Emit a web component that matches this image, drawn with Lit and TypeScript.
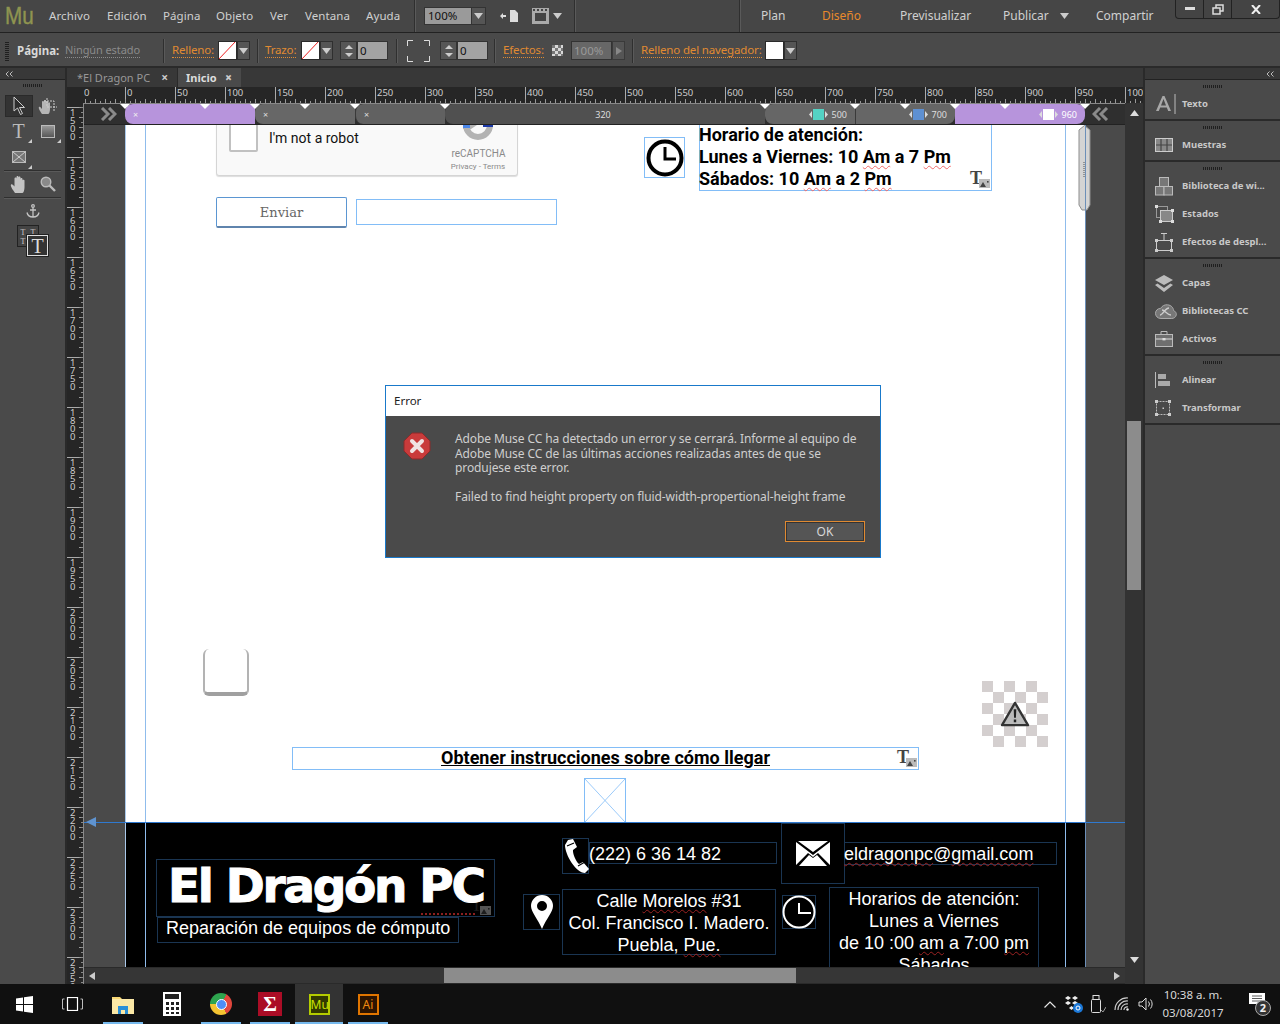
import { LitElement, html, css } from "lit";
import { customElement } from "lit/decorators.js";

const tri = (c = "#ccc") => html`<svg class="tri" width="9" height="6" viewBox="0 0 9 6"><path d="M0 0H9L4.5 6Z" fill=${c}/></svg>`;
const swatch = (k: string) => html`<div class="sw ${k}">${k !== "white" ? html`<svg width="18" height="19" viewBox="0 0 18 19"><path d="M0 19L18 0" stroke="#e22" stroke-width="1"/>${k === "stroke" ? html`<rect x="6" y="6" width="7" height="7" fill="#222" stroke="#e22"/>` : ""}</svg>` : ""}</div><div class="dd">${tri()}</div>`;
const stepper = () => html`<div class="step"><svg width="10" height="16" viewBox="0 0 10 16"><path d="M1 6L5 2L9 6ZM1 10H9L5 14Z" fill="#ccc"/></svg></div><div class="field num">0</div>`;
const grip = () => html`<div class="grip"></div>`;
const dbl = () => html`<svg width="8" height="6" viewBox="0 0 8 6" fill="none" stroke="#bbb"><path d="M3.5 .5L1 3L3.5 5.5M7.5 .5L5 3L7.5 5.5"/></svg>`;
const tIcon = (dark = false) => html`<div class="tim ${dark ? "dk" : ""}"><span>T</span><svg width="11" height="9" viewBox="0 0 11 9"><rect width="11" height="9" fill="#bbb"/><path d="M1 8L4 3L7 8Z" fill="#444"/><rect x="8" y="2" width="1.6" height="1.6" fill="#444"/></svg></div>`;
const bpHandle = (c: string, label: string) => html`<svg width="3" height="7" viewBox="0 0 3 7"><path d="M3 0L0 3.5L3 7Z" fill="#ddd"/></svg><div class="bs ${c}"></div><svg width="3" height="7" viewBox="0 0 3 7"><path d="M0 0L3 3.5L0 7Z" fill="#ddd"/></svg><span class="bl">${label}</span>`;

const menus: [string, number][] = [["Archivo", 58], ["Edición", 56], ["Página", 53], ["Objeto", 54], ["Ver", 35], ["Ventana", 61], ["Ayuda", 48]];
const rulerH = Array.from({ length: 21 }, (_, i) => i * 50);
const rulerV = Array.from({ length: 18 }, (_, i) => String(1500 + i * 50));
const marks = [125, 205, 255, 305, 355, 445, 765, 855, 905, 955, 1005, 1085];

const ctrl: [number, unknown][] = [
  [17, html`<div class="vgrip"></div>`],
  [48, html`<b class="lab-b">Página:</b>`],
  [98, html`<span class="dim">Ningún estado</span>`],
  [9, html`<div class="vs"></div>`],
  [46, html`<span class="or">Relleno:</span>`],
  [39, swatch("fill")],
  [8, html`<div class="vs"></div>`],
  [36, html`<span class="or">Trazo:</span>`],
  [39, swatch("stroke")],
  [56, stepper()],
  [11, html`<div class="vs"></div>`],
  [33, html`<svg width="23" height="22" viewBox="0 0 23 22" fill="none" stroke="#ddd"><path d="M.5 6V.5H6M17 .5H22.5V6M22.5 16V21.5H17M6 21.5H.5V16"/></svg>`],
  [54, stepper()],
  [9, html`<div class="vs"></div>`],
  [49, html`<span class="or">Efectos:</span>`],
  [19, html`<div class="chk"></div>`],
  [61, html`<div class="field pct">100%</div><div class="arr"><svg width="6" height="8" viewBox="0 0 6 8"><path d="M0 0L6 4L0 8Z" fill="#888"/></svg></div>`],
  [9, html`<div class="vs"></div>`],
  [124, html`<span class="or">Relleno del navegador:</span>`],
  [31, swatch("white")],
];

const panel: { k: string; label: string }[][] = [
  [{ k: "a", label: "Texto" }],
  [{ k: "grid", label: "Muestras" }],
  [{ k: "wid", label: "Biblioteca de wi..." }, { k: "est", label: "Estados" }, { k: "eff", label: "Efectos de despl..." }],
  [{ k: "cap", label: "Capas" }, { k: "cc", label: "Bibliotecas CC" }, { k: "act", label: "Activos" }],
  [{ k: "ali", label: "Alinear" }, { k: "tra", label: "Transformar" }],
];

const pIcon = (k: string) => {
  switch (k) {
    case "a": return html`<svg width="22" height="22" viewBox="0 0 22 22"><path d="M1 18L7.5 3H9.5L16 18H13.2L11.8 14.5H5.2L3.8 18ZM6 12.5H11L8.5 6Z" fill="#a8a8a8"/><path d="M20 1V21" stroke="#bbb"/></svg>`;
    case "grid": return html`<svg width="18" height="14" viewBox="0 0 18 14"><rect x=".5" y=".5" width="17" height="13" fill="#888" stroke="#ccc"/><path d="M6 1V13M12 1V13M1 7H17" stroke="#444" stroke-width="1.2"/></svg>`;
    case "wid": return html`<svg width="18" height="19" viewBox="0 0 18 19"><rect x="4.5" y=".5" width="9" height="9" fill="#777" stroke="#bbb"/><rect x=".5" y="9.5" width="8.5" height="8.5" fill="#777" stroke="#bbb"/><rect x="9" y="9.5" width="8.5" height="8.5" fill="#777" stroke="#bbb"/></svg>`;
    case "est": return html`<svg width="19" height="18" viewBox="0 0 19 18"><rect x="1.5" y="1.5" width="11" height="11" fill="none" stroke="#999"/><rect x="5.5" y="5.5" width="12" height="11" fill="#888" stroke="#ccc"/><path d="M0 0h3v3H0zM16 4h3v3h-3zM4 15h3v3H4zM16 15h3v3h-3z" fill="#ddd"/></svg>`;
    case "eff": return html`<svg width="18" height="19" viewBox="0 0 18 19" fill="none" stroke="#ccc"><path d="M6 .5H12M9 1V7"/><rect x="1.5" y="7.5" width="15" height="10"/><path d="M0 6h3v3H0zM15 6h3v3h-3zM0 16h3v3H0zM15 16h3v3h-3z" fill="#ccc" stroke="none"/></svg>`;
    case "cap": return html`<svg width="18" height="17" viewBox="0 0 18 17"><path d="M9 0L18 5L9 10L0 5Z" fill="#bbb"/><path d="M2.5 8.5L0 10L9 17L18 10L15.5 8.5L9 13Z" fill="#bbb"/></svg>`;
    case "cc": return html`<svg width="22" height="15" viewBox="0 0 22 15" fill="none"><path d="M6 14.5C2.5 14.5 .5 12 .5 9.3C.5 6.5 2.8 4.3 5.5 4.5C7 1.8 9.8 .5 12.5 .8C16.5 1.2 18.5 4 18.5 6.5C20.5 7.3 21.5 9 21.3 10.8C21 13 19 14.5 16.8 14.5Z" fill="#777" stroke="#aaa"/><path d="M5 11C8 11 10 4 14 4M16 11C12 11 10 6 7 6" stroke="#ccc" stroke-width="1.4"/></svg>`;
    case "act": return html`<svg width="18" height="16" viewBox="0 0 18 16"><rect x=".5" y="3.5" width="17" height="12" fill="#6f6f6f" stroke="#bbb"/><path d="M6 3V.5H12V3" fill="none" stroke="#bbb"/><path d="M1 8H17" stroke="#ddd"/><rect x="7.5" y="7" width="3" height="2.4" fill="#ddd"/></svg>`;
    case "ali": return html`<svg width="15" height="16" viewBox="0 0 15 16"><path d="M.5 0V16" stroke="#bbb"/><rect x="3" y="2" width="8" height="5" fill="#aaa"/><rect x="3" y="9" width="12" height="5" fill="#aaa"/></svg>`;
    default: return html`<svg width="16" height="16" viewBox="0 0 16 16"><rect x="1.5" y="1.5" width="13" height="13" fill="none" stroke="#bbb" stroke-dasharray="2 1"/><path d="M0 0h3v3H0zM13 0h3v3h-3zM0 13h3v3H0zM13 13h3v3h-3zM7.5 7.5h1.5v1.5H7.5z" fill="#ccc"/></svg>`;
  }
};

@customElement("app-root")
export class AppRoot extends LitElement {
  static styles = css`
    :host { display: block; width: 1280px; height: 1024px; }
    * { box-sizing: border-box; }
    .root { position: relative; width: 1280px; height: 1024px; overflow: hidden; background: #4a4a4a; display: grid; grid-template-rows: 33px 35px 916px 40px; font-family: "Noto Sans", sans-serif; font-size: 11.5px; color: #ccc; }
    svg { display: block; flex: none; }

    .menubar { display: flex; align-items: center; background: #464646; border-bottom: 1px solid #222; height: 33px; padding-bottom: 1px; position: relative; }
    .logo { width: 49px; padding-left: 5px; font: 24px/28px "Liberation Sans", sans-serif; color: #8f9450; flex: none; white-space: nowrap; transform: scaleX(.86); transform-origin: 5px 0; -webkit-text-stroke: .4px #8f9450; }
    .mi { font-size: 11.5px; color: #d0d0d0; flex: none; letter-spacing: .1px; }
    .vs { width: 2px; height: 24px; background: #2f2f2f; border-right: 1px solid #5a5a5a; flex: none; }
    .mbar-vs { height: 32px; }
    .zoomc { display: flex; margin-left: 8px; height: 18px; }
    .zf { width: 48px; background: #9a9a9a; color: #111; font-size: 11.5px; line-height: 16px; padding-left: 3px; border: 1px solid #333; }
    .zd { width: 14px; background: #555; border: 1px solid #333; border-left: 0; display: flex; align-items: center; justify-content: center; }
    .mic1 { margin-left: 14px; }
    .mic2 { margin-left: 14px; }
    .mtri { margin: 0 12px 0 4px; }
    .mr { margin-left: auto; display: flex; align-items: center; height: 100%; }
    .rvs { margin-right: 20px; }
    .mr span { font-size: 12px; color: #d0d0d0; flex: none; }
    .mr .plan { width: 61px; }
    .mr .dis { width: 78px; color: #e88a2c; }
    .mr .pre { width: 103px; }
    .mr .pub { width: 57px; }
    .pubtri { margin-right: 27px; }
    .mr .com { width: 79px; }
    .win { display: flex; align-self: flex-start; width: 105px; height: 19px; border: 1px solid #222; border-top: 0; border-radius: 0 0 4px 4px; background: #444; }
    .win div { display: flex; align-items: center; justify-content: center; height: 18px; border-right: 1px solid #222; width: 28px; }
    .win div:last-child { border-right: 0; flex: 1; }

    .ctl { display: flex; align-items: center; border-bottom: 2px solid #2a2a2a; background: #4a4a4a; height: 35px; padding-top: 2px; }
    .cell { display: flex; align-items: center; height: 19px; flex: none; white-space: nowrap; }
    .lab-b { color: #d8d8d8; font-size: 11.5px; }
    .dim { color: #8a8a8a; border-bottom: 1px dotted #8a8a8a; font-size: 11px; letter-spacing: -.1px; line-height: 14px; }
    .or { color: #e08a32; border-bottom: 1px dotted #e08a32; line-height: 14px; letter-spacing: -.15px; }
    .vgrip { width: 4px; height: 20px; margin-left: 5px; background: repeating-linear-gradient(0deg, #1f1f1f 0 1px, transparent 1px 2px); }
    .sw { width: 19px; height: 19px; background: #fff; border: 1px solid #2a2a2a; flex: none; overflow: hidden; }
    .sw svg { margin: -1px; }
    .dd { width: 13px; height: 19px; background: #555; border: 1px solid #2f2f2f; display: flex; align-items: center; justify-content: center; flex: none; }
    .step { width: 17px; height: 19px; background: #565656; border: 1px solid #333; display: flex; align-items: center; justify-content: center; flex: none; }
    .field { height: 19px; background: #a3a3a3; border: 1px solid #333; color: #111; line-height: 17px; padding-left: 2px; font-size: 11.5px; flex: none; }
    .num { width: 31px; }
    .pct { width: 41px; background: #676767; color: #999; }
    .arr { width: 13px; height: 19px; background: #555; border: 1px solid #3a3a3a; display: flex; align-items: center; justify-content: center; }
    .chk { width: 11px; height: 11px; background: repeating-conic-gradient(#d8d8d8 0 25%, #777 0 50%) 0 0 / 6px 6px; }

    .main { display: flex; height: 916px; background: #2a2a2a; }
    .tools { width: 65px; flex: none; background: #4a4a4a; display: flex; flex-direction: column; }
    .strip { height: 12px; background: #383838; border-bottom: 1px solid #222; display: flex; align-items: center; }
    .strip.l { padding-left: 5px; }
    .strip.r { justify-content: flex-end; padding-right: 6px; }
    .grip { width: 20px; height: 3px; margin: 4px auto 0; background: repeating-linear-gradient(90deg, #1f1f1f 0 1px, transparent 1px 2px); flex: none; }
    .toolgrid { display: grid; grid-template-columns: 29px 29px; padding-left: 4px; margin-top: 6px; grid-auto-rows: 25.5px; }
    .toolgrid.zero { margin-top: 0; }
    .t { display: flex; align-items: center; justify-content: center; position: relative; }
    .t.sel { background: #333; border: 1px solid #2a2a2a; height: 22px; margin: 2px 0 0 1px; }
    .t.corner::after { content: ""; position: absolute; right: 1px; bottom: 1px; border: 2px solid transparent; border-right-color: #ccc; border-bottom-color: #ccc; }
    .tT { font: 20px/22px "Liberation Serif", serif; color: #bbb; }
    .hr { background: #2f2f2f; border-bottom: 1px solid #5a5a5a; margin: 0 4px; height: 2px; flex: none; }
    .anchor { display: flex; justify-content: center; margin: 5px 0 7px; }
    .tstack { position: relative; width: 31px; height: 31px; margin-left: 17px; }
    .ts1 { width: 22px; height: 22px; border: 1px solid #222; background: #444; font: 8px/9px "Liberation Serif", serif; color: #ccc; display: grid; grid-template-columns: 1fr 1fr; text-align: center; padding-top: 2px; }
    .ts2 { position: absolute; right: 0; bottom: 0; width: 21px; height: 21px; background: #333; border: 1px solid #ddd; outline: 1px solid #222; font: 20px/20px "Liberation Serif", serif; color: #ddd; text-align: center; }

    .center { width: 1080px; flex: none; border-left: 2px solid #2a2a2a; border-right: 2px solid #2a2a2a; display: flex; flex-direction: column; }
    .tabs { height: 19px; background: #383838; display: flex; flex: none; font-size: 11px; }
    .tab { display: flex; align-items: center; height: 19px; }
    .tab1 { width: 110px; padding-left: 10px; justify-content: space-between; padding-right: 9px; color: #979797; }
    .tab2 { width: 64px; background: #4a4a4a; padding-left: 8px; padding-right: 9px; justify-content: space-between; color: #ddd; font-weight: 700; border-left: 1px solid #2a2a2a; }
    .tab b { color: #ccc; font-size: 12px; }
    .hrow { display: flex; height: 16px; flex: none; background: #262626; }
    .corner0 { width: 17px; flex: none; }
    .hruler { flex: 1; display: flex; overflow: hidden; font: 9.5px/11px "Noto Sans", sans-serif; color: #ccc;
      background-image: linear-gradient(90deg, #999 1px, transparent 1px), linear-gradient(90deg, #999 1px, transparent 1px), linear-gradient(90deg, #aaa 1px, transparent 1px);
      background-size: 5px 2px, 10px 4px, 50px 100%; background-position: 1px bottom, 1px bottom, 41px 0; background-repeat: repeat-x; }
    .hc { flex: none; width: 50px; padding-left: 2px; }
    .hc.first { width: 41px; padding-left: 0; }
    .body { flex: 1; display: flex; min-height: 0; }
    .vruler { width: 17px; flex: none; border-right: 1px solid #8a8a8a; background-color: #262626; overflow: hidden; display: flex; flex-direction: column;
      background-image: linear-gradient(0deg, #888 1px, transparent 1px), linear-gradient(0deg, #999 1px, transparent 1px), linear-gradient(0deg, #aaa 1px, transparent 1px);
      background-size: 2px 5px, 4px 10px, 100% 50px; background-position: right 0, right 5px, 0 5px; background-repeat: repeat-y; }
    .vs0 { height: 5px; flex: none; }
    .vc { height: 50px; flex: none; padding: 1px 0 0 3px; font: 9.5px/8px "Noto Sans", sans-serif; color: #ccc; }
    .vc span { display: block; height: 8px; }
    .mid { width: 1041px; flex: none; display: flex; flex-direction: column; }
    .bpbar { height: 21px; flex: none; display: flex; background: #2f2f2f; position: relative; border-top: 1px solid #888; color: #ddd; font-size: 9px; }
    .chev { width: 41px; flex: none; display: flex; align-items: center; justify-content: center; padding-left: 7px; }
    .chev.rt { width: 40px; padding: 0 10px 0 0; }
    .seg { flex: none; display: flex; align-items: center; height: 20px; border-radius: 8px 0 0 8px; }
    .purple { width: 130px; background: #b794dc; padding-left: 8px; color: #eee; }
    .g1 { width: 100px; background: #676767; padding-left: 8px; }
    .g2 { width: 90px; background: #616161; padding-left: 8px; border-left: 1px solid #3a3a3a; }
    .g3 { width: 320px; background: #505050; justify-content: center; padding-right: 4px; }
    .g4 { width: 90px; background: #666; justify-content: flex-end; gap: 1px; padding-right: 8px; border-radius: 8px 0 0 8px; }
    .g5 { width: 100px; background: #666; justify-content: flex-end; gap: 1px; padding-right: 8px; border-radius: 0 0 8px 0; border-left: 1px solid #3a3a3a; }
    .p2 { width: 130px; background: #b794dc; justify-content: flex-end; gap: 1px; padding-right: 8px; border-radius: 0 8px 8px 0; color: #fff; }
    .bs { width: 11px; height: 11px; }
    .bl { margin-left: 3px; }
    .teal { background: #54d2c4; } .blue { background: #5e90d2; } .wht { background: #fff; }
    .m { position: absolute; top: 0; width: 0; height: 0; border: 5px solid transparent; border-top: 5px solid #fff; border-bottom: 0; margin-left: -5px; }
    .canvas { height: 843px; flex: none; position: relative; overflow: hidden; background: #4a4a4a; border-top: 1px solid #222; }
    .stage { position: absolute; left: -84px; top: -125px; width: 1280px; height: 1024px; color: #000; font-family: "Liberation Sans", sans-serif; }
    .stage > * { position: absolute; }
    .thumb-in { position: absolute; left: 994px; top: 0; }
    .page { left: 125px; top: 100px; width: 960px; height: 723px; background: #fff; }
    .guide { top: 100px; width: 1px; height: 867px; background: #8fbcec; }
    .g-a { left: 145px; } .g-b { left: 1065px; } .g-c { left: 1085px; background: #6c8fb8; } .g-d { left: 125px; background: #a9c8ea; }
    .footer { left: 125px; top: 823px; width: 960px; height: 144px; background: #000; }
    .guide.over { z-index: 2; }
    .hline { left: 84px; top: 822px; width: 1041px; height: 1px; background: #2f79cf; z-index: 3; }
    .hmark { left: 86px; top: 817px; border: 5px solid transparent; border-right: 10px solid #5f93cf; border-left: 0; z-index: 3; }

    .rc { left: 216px; top: 110px; width: 302px; height: 66px; background: #f9f9f9; border: 1px solid #d5d5d5; border-radius: 3px; box-shadow: 0 1px 1px #ddd; }
    .rc-box { left: 229px; top: 120px; width: 29px; height: 32px; background: #fff; border: 2px solid #c1c1c1; border-radius: 2px; }
    .rc-t { left: 269px; top: 130px; font: 14px/17px Roboto, sans-serif; color: #111; }
    .rc-logo { left: 463px; top: 112px; }
    .rc-a { left: 451px; top: 148px; font: 10px/12px Roboto, sans-serif; color: #8a8a8a; width: 55px; text-align: center; }
    .rc-b { left: 450px; top: 162px; font: 8px/10px Roboto, sans-serif; color: #8a8a8a; width: 56px; text-align: center; }
    .enviar { left: 216px; top: 197px; width: 131px; height: 31px; border: 1px solid #5b96d2; border-bottom: 2px solid #5f84ad; border-radius: 2px; background: #fff; font: 13px/29px "DejaVu Serif", serif; color: #666; text-align: center; }
    .blue-b { border: 1px solid #82bdf7; }
    .ebox { left: 356px; top: 199px; width: 201px; height: 26px; }
    .clock-b { left: 644px; top: 137px; width: 41px; height: 41px; display: flex; align-items: center; justify-content: center; }
    .hours { left: 699px; top: 124px; width: 293px; height: 67px; font: 700 18px/22px Roboto, sans-serif; color: #000; white-space: nowrap; }
    .hours div { margin: -1px 0 0 -1px; }
    .sq { text-decoration: underline wavy #ef6a6a 1px; text-underline-offset: 2px; text-decoration-skip-ink: none; }
    .sqd { text-decoration: underline wavy #9c2222 1px; text-underline-offset: 2px; text-decoration-skip-ink: none; }
    .tim { width: 20px; height: 18px; }
    .tim span { position: absolute; left: 0; top: -2px; font: 700 18px/20px "Liberation Serif", serif; color: #444; }
    .tim svg { position: absolute; right: 0; bottom: 0; }
    .tim.dk span { color: #3a3a3a; font-weight: 400; }
    .tim1 { left: 970px; top: 170px; } .tim2 { left: 897px; top: 749px; } .tim3 { left: 471px; top: 897px; opacity: .45; }
    .btn-sh { left: 203px; top: 649px; width: 46px; height: 47px; background: #fff; border: 2px solid #b3b3b3; border-top: 0; border-bottom: 4px solid #a0a0a0; border-radius: 6px; }
    .chk2 { left: 982px; top: 681px; width: 66px; height: 66px; background: repeating-conic-gradient(#d4cfcf 0 25%, #fff 0 50%) 11px 0 / 22px 22px; display: flex; align-items: center; justify-content: center; }
    .title { left: 292px; top: 747px; width: 627px; height: 23px; font: 700 18px/20px Roboto, sans-serif; text-align: center; text-decoration: underline; color: #000; }
    .xbox { left: 584px; top: 778px; width: 42px; height: 45px; }

    .nb { border: 1px solid #1a3552; color: #fff; z-index: 1; }
    .flogo { left: 156px; top: 859px; width: 339px; height: 58px; font: 700 47px/52px "DejaVu Sans", sans-serif; padding-left: 11px; letter-spacing: -2.3px; white-space: nowrap; -webkit-text-stroke: 1px #fff; }
    .flogo-sq { left: 421px; top: 912px; width: 54px; height: 3px; border-bottom: 2px dotted #8c1f1f; z-index: 2; }
    .fsub { left: 157px; top: 917px; width: 302px; height: 26px; font: 18px/20px "Liberation Sans", sans-serif; padding-left: 8px; white-space: nowrap; }
    .fph { left: 562px; top: 838px; width: 27px; height: 36px; display: flex; align-items: center; justify-content: center; }
    .fpt { left: 589px; top: 842px; width: 188px; height: 22px; font: 18px/23px "Liberation Sans", sans-serif; white-space: nowrap; text-indent: -1px; }
    .fen { left: 781px; top: 823px; width: 64px; height: 61px; display: flex; align-items: center; justify-content: center; }
    .fem { left: 844px; top: 842px; width: 213px; height: 23px; font: 18px/23px "Liberation Sans", sans-serif; white-space: nowrap; text-indent: -1px; }
    .fpin { left: 523px; top: 894px; width: 37px; height: 36px; display: flex; align-items: center; justify-content: center; }
    .fad { left: 562px; top: 889px; width: 214px; height: 66px; font: 18px/22px "Liberation Sans", sans-serif; text-align: center; white-space: nowrap; }
    .fcl { left: 782px; top: 895px; width: 34px; height: 34px; display: flex; align-items: center; justify-content: center; }
    .fho { left: 829px; top: 887px; width: 210px; height: 85px; font: 18px/20px "Liberation Sans", sans-serif; text-align: center; white-space: nowrap; }
    .fho div { line-height: 22px; }

    .hscroll { height: 16px; flex: none; background: #363636; border-top: 1px solid #2a2a2a; display: flex; align-items: center; justify-content: space-between; padding: 0 5px; position: relative; }
    .hthumb { position: absolute; left: 360px; top: 0; width: 352px; height: 15px; background: #8c8c8c; }
    .vsb { width: 18px; flex: none; background: #333; position: relative; display: flex; flex-direction: column; justify-content: space-between; align-items: center; padding: 7px 0 21px; }
    .vthumb { position: absolute; left: 2px; top: 318px; width: 14px; height: 169px; background: #8c8c8c; }
    .right { width: 135px; flex: none; background: #4a4a4a; }
    .grp { border-bottom: 2px solid #2a2a2a; padding: 5px 0 1px; display: flex; flex-direction: column; }
    .grp .grip { margin: 0 auto 2px; width: 20px; height: 3px; }
    .it { display: flex; align-items: center; height: 28px; font: 700 9.5px/12px "Noto Sans", sans-serif; color: #c8c8c8; white-space: nowrap; }
    .ic { width: 37px; padding-left: 10px; display: flex; justify-content: flex-start; flex: none; }

    .task { background: #101010; display: flex; height: 40px; position: relative; z-index: 4; }
    .tb { width: 48px; height: 40px; flex: none; display: flex; align-items: center; justify-content: center; position: relative; }
    .tb.gap { margin-left: 3px; }
    .tb.m1 { margin-left: 1px; }
    .tb.on::after { content: ""; position: absolute; left: 4px; right: 4px; bottom: 0; height: 2px; background: #76b9ed; }
    .tb.act { background: #333; }
    .tb.act::after { left: 0; right: 0; }
    .chrome { width: 22px; height: 22px; border-radius: 50%; background: conic-gradient(from 30deg, #e0463c 0 120deg, #f4c331 120deg 240deg, #2da44e 240deg 360deg); display: flex; align-items: center; justify-content: center; }
    .chrome i { width: 9px; height: 9px; border-radius: 50%; background: #4e8df5; border: 1.5px solid #fff; box-sizing: content-box; }
    .xara { width: 24px; height: 24px; background: #ab0d26; color: #fff; font: 700 21px/24px "Liberation Serif", serif; text-align: center; }
    .mu { width: 21px; height: 21px; background: #333a00; border: 2px solid #b4cc00; color: #c8e000; font: 12px/17px "Noto Sans", sans-serif; text-align: center; }
    .ai { width: 21px; height: 21px; background: #2d1400; border: 2px solid #e07500; color: #f08a10; font: 12px/17px "Noto Sans", sans-serif; text-align: center; }
    .tray { margin-left: auto; display: flex; align-items: center; height: 40px; }
    .ti { flex: none; width: 24px; display: flex; justify-content: center; }
    .clock { width: 66px; margin-left: 2px; text-align: center; font: 11.5px/18px "Noto Sans", sans-serif; color: #d8d8d8; white-space: nowrap; }
    .noti { width: 46px; margin-left: 8px; display: flex; justify-content: center; position: relative; height: 22px; }
    .bdg { position: absolute; left: 21px; top: 7px; width: 16px; height: 16px; border-radius: 50%; background: #333; border: 1px solid #aaa; color: #eee; font: 700 11px/14px "Noto Sans", sans-serif; text-align: center; }

    .dialog { position: absolute; left: 385px; top: 385px; width: 496px; height: 173px; background: #4a4a4a; border: 1px solid #1979ca; z-index: 5; display: flex; flex-direction: column; font-family: "Noto Sans", sans-serif; }
    .dt { height: 30px; background: #fff; color: #222; font-size: 11.5px; line-height: 30px; padding-left: 8px; flex: none; }
    .db { flex: 1; display: flex; padding: 15px 16px 15px 17px; position: relative; }
    .dic { width: 52px; flex: none; padding-top: 1px; }
    .dx { width: 405px; flex: none; padding-top: 1px; color: #cfcfcf; font-size: 12px; line-height: 14.5px; letter-spacing: -.1px; }
    .dx p { margin: 0 0 14.5px; }
    .ok { position: absolute; right: 15px; bottom: 15px; width: 80px; height: 21px; border: 1px solid #e08a32; background: #555; box-shadow: inset 0 0 0 1px #333; color: #d8d8d8; font-size: 12px; line-height: 19px; text-align: center; }
  `;

  render() {
    return html`<div class="root">
      <div class="menubar">
        <div class="logo">Mu</div>
        ${menus.map(([m, w]) => html`<div class="mi" style="width:${w}px">${m}</div>`)}
        <div class="vs mbar-vs"></div>
        <div class="zoomc"><div class="zf">100%</div><div class="zd">${tri()}</div></div>
        <svg class="mic1" width="18" height="14" viewBox="0 0 18 14"><path d="M0 7L3 4V6H6V8H3V10Z M10 1H15L18 4V13H10Z" fill="#ddd"/></svg>
        <svg class="mic2" width="17" height="16" viewBox="0 0 17 16"><rect width="17" height="16" fill="#aaa"/><rect x="3" y="5" width="11" height="8" fill="#444"/><path d="M1 1h2v2H1zM5 1h2v2H5zM9 1h2v2H9zM13 1h2v2h-2z" fill="#444"/></svg>
        <div class="mtri">${tri()}</div>
        <div class="vs mbar-vs"></div>
        <div class="mr">
          <div class="vs mbar-vs rvs"></div>
          <span class="plan">Plan</span><span class="dis">Diseño</span><span class="pre">Previsualizar</span><span class="pub">Publicar</span>
          <div class="pubtri">${tri()}</div><span class="com">Compartir</span>
          <div class="win">
            <div><svg width="10" height="4" viewBox="0 0 10 4"><rect width="10" height="3" fill="#ddd"/></svg></div>
            <div><svg width="12" height="11" viewBox="0 0 12 11" fill="none" stroke="#ddd" stroke-width="1.5"><rect x="4" y="1" width="7" height="6"/><rect x="1" y="4" width="7" height="6" fill="#444"/></svg></div>
            <div><svg width="10" height="9" viewBox="0 0 10 9" stroke="#eee" stroke-width="2"><path d="M1 0L9 9M9 0L1 9"/></svg></div>
          </div>
        </div>
      </div>

      <div class="ctl">
        ${ctrl.map(([w, c]) => html`<div class="cell" style="width:${w}px">${c}</div>`)}
      </div>

      <div class="main">
        <div class="tools">
          <div class="strip l">${dbl()}</div>
          ${grip()}
          <div class="toolgrid">
            <div class="t sel"><svg width="13" height="20" viewBox="0 0 13 20"><path d="M1 1V15L4.5 12L7.5 18.5L9.5 17.5L6.5 11.5H11.5Z" fill="#2d2d2d" stroke="#ccc"/></svg></div>
            <div class="t"><svg width="20" height="20" viewBox="0 0 20 20"><path d="M4 18C2 15 0 12 1 11C2 10 3 12 4 13V6C4 4.5 6 4.5 6 6V5C6 3.5 8 3.5 8 5V6C8 4.5 10 4.5 10 6V7C10 6 12 6 12 7V13C12 16 11 18 10 18Z" fill="#b5b5b5"/><path d="M9 2V11H19M6 5H16V15" fill="none" stroke="#ccc" stroke-dasharray="2 1"/></svg></div>
            <div class="t corner"><span class="tT">T</span></div>
            <div class="t corner"><svg width="14" height="13" viewBox="0 0 14 13"><defs><linearGradient id="g" x1="0" y1="0" x2="0" y2="1"><stop offset="0" stop-color="#9a9a9a"/><stop offset="1" stop-color="#555"/></linearGradient></defs><rect x=".5" y=".5" width="13" height="12" fill="url(#g)" stroke="#bbb"/></svg></div>
            <div class="t corner"><svg width="14" height="12" viewBox="0 0 14 12"><rect x=".5" y=".5" width="13" height="11" fill="#777" stroke="#bbb"/><path d="M1 1L13 11M13 1L1 11" stroke="#ccc"/></svg></div>
            <div class="t"></div>
          </div>
          <div class="hr"></div>
          <div class="toolgrid zero">
            <div class="t"><svg width="18" height="18" viewBox="0 0 18 18"><path d="M5 18C3 15 0 11 1 9.5C2 8.5 3.5 10.5 4.5 11.5V3.5C4.5 2 6.5 2 6.5 3.5V2C6.5.5 8.5.5 8.5 2V2.5C8.5 1 10.5 1 10.5 2.5V4C10.5 2.5 12.5 2.5 12.5 4V5.5C12.5 4.5 14.5 4.5 14.5 5.5V12C14.5 15 13.5 18 12.5 18Z" fill="#c4c4c4"/></svg></div>
            <div class="t"><svg width="16" height="16" viewBox="0 0 16 16"><circle cx="6" cy="6" r="4.8" fill="#8a8a8a" stroke="#bbb" stroke-width="1.4"/><path d="M9.5 9.5L15 15" stroke="#bbb" stroke-width="2.4"/></svg></div>
          </div>
          <div class="hr"></div>
          <div class="anchor"><svg width="14" height="14" viewBox="0 0 14 14" fill="none" stroke="#c4c4c4" stroke-width="1.3"><circle cx="7" cy="2" r="1.3"/><path d="M7 3.5V13M4 6H10M1 8.5C1.5 11 4 13 7 13C10 13 12.5 11 13 8.5"/></svg></div>
          <div class="tstack"><div class="ts1"><span>T</span><span>T</span><span>T</span></div><div class="ts2">T</div></div>
        </div>

        <div class="center">
          <div class="tabs">
            <div class="tab tab1">*El Dragon PC <b>×</b></div>
            <div class="tab tab2">Inicio <b>×</b></div>
          </div>
          <div class="hrow">
            <div class="corner0"></div>
            <div class="hruler">
              <div class="hc first">0</div>
              ${rulerH.map((n) => html`<div class="hc">${n}</div>`)}
            </div>
          </div>
          <div class="body">
            <div class="vruler">
              <div class="vs0"></div>
              ${rulerV.map((n) => html`<div class="vc">${[...n].map((d) => html`<span>${d}</span>`)}</div>`)}
            </div>
            <div class="mid">
              <div class="bpbar">
                <div class="chev"><svg width="17" height="14" viewBox="0 0 17 14" fill="none" stroke="#8a8a8a" stroke-width="3"><path d="M2 1L8 7L2 13M9 1L15 7L9 13"/></svg></div>
                <div class="seg purple">×</div>
                <div class="seg g1">×</div>
                <div class="seg g2">×</div>
                <div class="seg g3">320</div>
                <div class="seg g4">${bpHandle("teal", "500")}</div>
                <div class="seg g5">${bpHandle("blue", "700")}</div>
                <div class="seg p2">${bpHandle("wht", "960")}</div>
                <div class="chev rt"><svg width="17" height="14" viewBox="0 0 17 14" fill="none" stroke="#8a8a8a" stroke-width="3"><path d="M15 1L9 7L15 13M8 1L2 7L8 13"/></svg></div>
                ${marks.map((x) => html`<div class="m" style="left:${x - 84}px"></div>`)}
              </div>
              <div class="canvas">
                <div class="stage">
                  <div class="page"></div>
                  <div class="footer"></div>
                  <div class="guide g-d"></div>
                  <div class="guide g-a over"></div><div class="guide g-b over"></div><div class="guide g-c over"></div>
                  <div class="hline"></div>
                  <div class="hmark"></div>

                  <div class="rc"></div><div class="rc-box"></div><div class="rc-t">I'm not a robot</div>
                  <svg class="rc-logo" width="30" height="32" viewBox="0 0 30 32" fill="none"><path d="M3 13A12 12 0 0 0 27 13" stroke="#b3b3b3" stroke-width="6"/><path d="M8 17L14 13H0V17Z" fill="#b3b3b3"/><rect x="0" y="11" width="7" height="5" fill="#4a86e8"/><rect x="20" y="11" width="10" height="4" fill="#1c3aa9"/></svg>
                  <div class="rc-a">reCAPTCHA</div><div class="rc-b">Privacy - Terms</div>
                  <div class="enviar">Enviar</div>
                  <div class="ebox blue-b"></div>
                  <div class="clock-b blue-b"><svg width="38" height="38" viewBox="0 0 38 38" fill="none" stroke="#000"><circle cx="19" cy="19" r="16.5" stroke-width="4"/><path d="M19 8V20H30" stroke-width="3"/></svg></div>
                  <div class="hours blue-b"><div>Horario de atención:<br>Lunes a Viernes: 10 <span class="sq">Am</span> a 7 <span class="sq">Pm</span><br>Sábados: 10 <span class="sq">Am</span> a 2 <span class="sq">Pm</span></div></div>
                  <div class="tim tim1">${tIcon()}</div>
                  <div class="btn-sh"></div>
                  <div class="chk2"><svg width="30" height="26" viewBox="0 0 32 28"><path d="M16 2L30 26H2Z" fill="#bbb" stroke="#333" stroke-width="2.5" stroke-linejoin="round"/><path d="M14.6 9H17.4L17 18H15ZM14.7 20H17.3V23H14.7Z" fill="#222"/></svg></div>
                  <div class="title blue-b">Obtener instrucciones sobre cómo llegar</div>
                  <div class="tim tim2">${tIcon()}</div>
                  <svg class="xbox" width="42" height="45" viewBox="0 0 42 45" fill="none" stroke="#82bdf7"><rect x=".5" y=".5" width="41" height="44"/><path d="M1 1L41 44M41 1L1 44" stroke-width=".8"/></svg>

                  <div class="flogo nb">El Dragón PC</div>
                  <div class="tim tim3">${tIcon(true)}</div>
                  <div class="flogo-sq"></div>
                  <div class="fsub nb">Reparación de equipos de cómputo</div>
                  <div class="fph nb"><svg width="28" height="36" viewBox="0 0 28 36"><path d="M6 2L11 1L15 9L11 12C10.5 15 13.5 23 17 26L21 24L27 31L23 35C14 35 3 17 3 7Z" fill="#fff"/><path d="M5 8L12 5M16 28L23 24" stroke="#000" stroke-width="1.2"/></svg></div>
                  <div class="fpt nb">(222) 6 36 14 82</div>
                  <div class="fen nb"><svg width="34" height="25" viewBox="0 0 34 25"><path d="M0 1L17 14L34 1V24L22 12L17 16L12 12L0 24ZM2 0H32L17 11ZM3 25L13 14L17 17L21 14L31 25Z" fill="#fff"/></svg></div>
                  <div class="fem nb"><span class="sqd">eldragonpc</span>@<span class="sqd">gmail.com</span></div>
                  <div class="fpin nb"><svg width="22" height="34" viewBox="0 0 22 34"><path fill-rule="evenodd" d="M11 0A11 11 0 0 1 22 11C22 17 15 24 11 34C7 24 0 17 0 11A11 11 0 0 1 11 0ZM11 6A5 5 0 1 0 11 16A5 5 0 1 0 11 6Z" fill="#fff"/></svg></div>
                  <div class="fad nb">Calle <span class="sqd">Morelos</span> #31<br>Col. Francisco I. Madero.<br>Puebla, <span class="sqd">Pue.</span></div>
                  <div class="fcl nb"><svg width="34" height="34" viewBox="0 0 34 34" fill="none" stroke="#fff"><circle cx="17" cy="17" r="15.5" stroke-width="2"/><path d="M17 8V18H29" stroke-width="2"/></svg></div>
                  <div class="fho nb"><div>Horarios de atención:<br>Lunes a Viernes<br>de 10 :00 <span class="sqd">am</span> a 7:00 <span class="sqd">pm</span><br>Sábados</div></div>
                </div>
                <svg class="thumb-in" width="13" height="86" viewBox="0 0 13 86"><path d="M1 5L6.5 .5L12 5V80L9 85H4L1 80Z" fill="#d4d4d4" stroke="#8d8d8d"/><path d="M6 37V52M7.5 37V52" stroke="#555" stroke-dasharray="1 1"/></svg>
              </div>
              <div class="hscroll">
                <svg width="6" height="8" viewBox="0 0 6 8"><path d="M6 0L0 4L6 8Z" fill="#ccc"/></svg>
                <div class="hthumb"></div>
                <svg width="6" height="8" viewBox="0 0 6 8"><path d="M0 0L6 4L0 8Z" fill="#ccc"/></svg>
              </div>
            </div>
            <div class="vsb">
              <svg width="9" height="6" viewBox="0 0 9 6"><path d="M0 6H9L4.5 0Z" fill="#ddd"/></svg>
              <div class="vthumb"></div>
              <svg width="9" height="6" viewBox="0 0 9 6"><path d="M0 0H9L4.5 6Z" fill="#ddd"/></svg>
            </div>
          </div>
        </div>

        <div class="right">
          <div class="strip r">${dbl()}</div>
          ${panel.map((g) => html`<div class="grp">${grip()}${g.map((i) => html`<div class="it"><div class="ic">${pIcon(i.k)}</div>${i.label}</div>`)}</div>`)}
        </div>
      </div>

      <div class="task">
        <div class="tb"><svg width="17" height="17" viewBox="0 0 17 17"><path d="M0 2.4L7 1.4V8H0ZM8 1.2L17 0V8H8ZM0 9H7V15.6L0 14.6ZM8 9H17V17L8 15.8Z" fill="#fff"/></svg></div>
        <div class="tb"><svg width="21" height="14" viewBox="0 0 21 14" fill="none" stroke="#fff"><rect x="5.5" y=".5" width="10" height="13" stroke-width="1.2"/><path d="M2.5 2H.5V12H2.5M18.5 2H20.5V12H18.5" stroke="#bbb"/></svg></div>
        <div class="tb gap on"><svg width="22" height="19" viewBox="0 0 22 19"><path d="M0 2H8L10 4H22V19H0Z" fill="#f7d774"/><rect y="4" width="22" height="15" fill="#fbe8a6"/><path d="M6 11H16V19H13V15H9V19H6Z" fill="#2a8fd8"/></svg></div>
        <div class="tb m1"><svg width="18" height="24" viewBox="0 0 18 24"><rect width="18" height="24" fill="#fff"/><rect x="2" y="2" width="14" height="5" fill="#222"/><path d="M3 10h3v3H3zM8 10h3v3H8zM13 10h3v3h-3zM3 15h3v3H3zM8 15h3v3H8zM13 15h3v3h-3zM3 20h3v2H3zM8 20h3v2H8zM13 20h3v2h-3z" fill="#222"/></svg></div>
        <div class="tb m1 on"><div class="chrome"><i></i></div></div>
        <div class="tb m1 on"><div class="xara">Σ</div></div>
        <div class="tb m1 on act"><div class="mu">Mu</div></div>
        <div class="tb m1 on"><div class="ai">Ai</div></div>
        <div class="tray">
          <div class="ti"><svg width="12" height="7" viewBox="0 0 12 7" fill="none" stroke="#e8e8e8" stroke-width="1.2"><path d="M.5 6.5L6 1L11.5 6.5"/></svg></div>
          <div class="ti"><svg width="18" height="18" viewBox="0 0 18 18"><path d="M3 1L6 3L3 5L0 3ZM10 1L13 3L10 5L7 3ZM3 6L6 8L3 10L0 8ZM10 6L13 8L10 10L7 8ZM6.5 11L9 13L6.5 15L4 13Z" fill="#eee"/><circle cx="13" cy="13" r="5" fill="#1b78d8"/><circle cx="13" cy="13" r="2" fill="none" stroke="#fff"/></svg></div>
          <div class="ti"><svg width="15" height="18" viewBox="0 0 15 18" fill="none" stroke="#ddd"><rect x="2" y=".5" width="6" height="4"/><rect x=".5" y="4.5" width="9" height="13" rx="1"/><path d="M10 15L12 17L15 12" stroke="#999"/></svg></div>
          <div class="ti"><svg width="16" height="14" viewBox="0 0 16 14" fill="none" stroke="#ccc" stroke-width="1.2"><path d="M1 13A12 12 0 0 1 14 1M4 13A9 9 0 0 1 14 4M7 13A6 6 0 0 1 14 7M10 13A3 3 0 0 1 14 10"/><circle cx="13.5" cy="12.5" r="1.2" fill="#eee" stroke="none"/></svg></div>
          <div class="ti"><svg width="16" height="14" viewBox="0 0 16 14" fill="none" stroke="#ddd"><path d="M1 5H4L8 1V13L4 9H1ZM10.5 4.5A4 4 0 0 1 10.5 9.5M12.5 2.5A7 7 0 0 1 12.5 11.5"/></svg></div>
          <div class="clock">10:38 a. m.<br>03/08/2017</div>
          <div class="noti"><svg width="16" height="14" viewBox="0 0 16 14"><path d="M0 0H16V11H10L7 14V11H0Z" fill="#fff"/><path d="M3 3H13M3 5.5H13M3 8H13" stroke="#333" stroke-width=".8"/></svg><div class="bdg">2</div></div>
        </div>
      </div>

      <div class="dialog">
        <div class="dt">Error</div>
        <div class="db">
          <div class="dic"><svg width="28" height="28" viewBox="0 0 28 28"><path d="M9 1H19L27 9V19L19 27H9L1 19V9Z" fill="#c93b3b" stroke="#8a2a2a"/><path d="M9 9L19 19M19 9L9 19" stroke="#f0e3e3" stroke-width="4" stroke-linecap="round"/></svg></div>
          <div class="dx"><p>Adobe Muse CC ha detectado un error y se cerrará. Informe al equipo de Adobe Muse CC de las últimas acciones realizadas antes de que se produjese este error.</p><p>Failed to find height property on fluid-width-propertional-height frame</p></div>
          <div class="ok">OK</div>
        </div>
      </div>
    </div>`;
  }
}
